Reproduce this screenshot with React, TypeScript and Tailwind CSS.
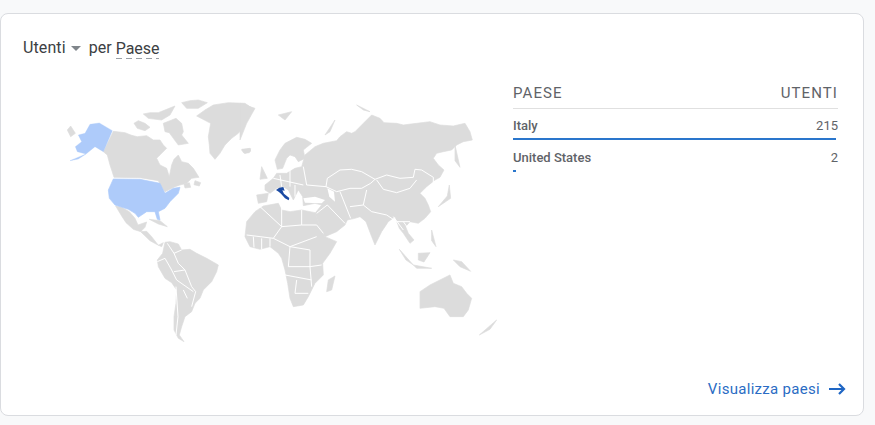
const LAND = '#dcdcdc'
const LIGHT = '#aecbfa'
const DARK = '#1a4aa3'

const americas = [
  // canada
  'M190,124 L225,128 L245,136 L262,140 L290,137 L310,150 L330,150 L340,165 L350,175 L335,190 L320,205 L330,225 L350,235 L358,260 L365,225 L372,208 L385,195 L395,215 L415,220 L430,235 L447,262 L425,265 L410,280 L390,285 L375,290 L345,305 L335,290 L325,272 L270,263 L192,262 L185,240 L180,225 L172,195 L160,185 Z',
  // arctic islands
  'M252,100 L265,92 L285,100 L300,112 L285,122 L262,115 Z',
  'M280,72 L300,68 L325,68 L350,58 L375,48 L360,75 L335,90 L318,88 L295,85 Z',
  'M340,100 L360,92 L378,85 L395,100 L400,125 L395,135 L415,160 L385,165 L370,145 L358,128 L345,125 Z',
  'M395,38 L420,32 L445,30 L472,38 L445,55 L410,55 Z',
  // greenland
  'M440,78 L465,60 L490,45 L535,38 L585,40 L612,58 L592,85 L578,115 L565,130 L545,145 L525,165 L510,190 L495,208 L480,190 L478,165 L475,140 L482,100 Z',
  'M575,178 L600,175 L602,184 L585,190 Z',
  'M52,120 L62,108 L76,130 L62,140 Z',
  // mexico and central america
  'M197,348 L215,352 L238,365 L255,385 L264,405 L290,396 L285,412 L272,425 L250,418 L228,398 L215,378 Z',
  'M272,425 L290,424 L305,440 L325,466 L340,458 L335,470 L318,462 L300,452 Z',
  'M298,388 L330,392 L352,410 L325,402 Z',
  'M402,282 L418,278 L422,292 L405,294 Z',
  'M435,272 L452,278 L448,288 L432,284 Z',
  // south america
  'M345,457 L360,455 L385,462 L395,480 L420,478 L440,490 L470,505 L505,525 L500,545 L485,575 L460,600 L450,625 L435,640 L425,665 L405,680 L395,710 L388,735 L402,755 L385,745 L372,720 L372,680 L378,640 L380,600 L365,578 L345,565 L325,530 L322,510 L338,490 Z',
]

const usa = 'M190,267 L270,268 L330,280 L345,310 L370,295 L390,292 L385,310 L360,335 L345,355 L325,365 L330,390 L322,388 L315,365 L290,365 L265,382 L255,370 L235,358 L195,345 L178,325 L175,300 Z'
const alaska = 'M120,103 L148,99 L187,122 L160,185 L135,170 L108,192 L82,185 L76,170 L95,155 L85,135 L105,130 Z M60,212 L108,192 L85,207 Z'

const americaBorders = [
  'M345,505 L365,540 L380,570 L430,605',
  'M372,545 L405,540 L425,590 L437,605 L425,650',
  'M378,590 L384,680 L378,735',
  'M352,460 L372,490 L395,480 M372,490 L385,520 L405,540',
  'M322,515 L345,505',
  'M400,600 L412,625',
]

const eastern = [
  // eurasia
  'M185,230 L195,195 L225,170 L250,160 L290,152 L300,140 L320,125 L335,130 L345,125 L370,100 L395,75 L420,85 L432,98 L470,100 L490,105 L530,100 L570,95 L600,105 L640,108 L675,100 L690,125 L697,150 L670,155 L650,165 L635,180 L610,185 L590,190 L580,205 L595,225 L612,240 L600,262 L585,270 L560,290 L540,310 L555,325 L565,345 L572,365 L555,385 L535,400 L510,395 L497,410 L505,430 L522,450 L510,460 L490,430 L478,415 L465,380 L445,395 L425,425 L405,465 L395,440 L378,395 L360,380 L345,385 L322,390 L315,405 L290,425 L255,440 L240,410 L225,370 L245,345 L225,340 L190,347 L188,320 L175,300 L160,330 L145,300 L130,290 L110,295 L90,310 L75,300 L75,285 L100,265 L110,250 L140,250 L165,235 Z',
  // scandinavia
  'M105,210 L120,180 L135,160 L170,142 L195,148 L215,160 L200,172 L190,180 L195,205 L175,215 L165,200 L150,195 L140,205 L128,235 L112,238 Z',
  // iberia, britain and islands
  'M50,315 L85,310 L80,335 L55,340 Z',
  'M65,230 L82,265 L60,268 Z',
  'M115,75 L155,65 L135,90 Z',
  'M350,45 L390,65 L370,60 Z',
  'M255,135 L285,90 L270,125 Z',
  'M0,40 L45,55 L20,100 L0,150 Z',
  'M5,180 L32,176 L28,188 L12,190 Z',
  // africa
  'M20,395 L45,365 L70,348 L115,340 L125,360 L150,365 L185,360 L225,368 L240,410 L255,440 L290,455 L270,490 L248,520 L250,555 L225,580 L205,620 L190,645 L160,650 L150,625 L143,580 L135,540 L125,505 L115,490 L90,470 L60,478 L30,470 L15,440 Z',
  'M265,570 L285,558 L275,600 L260,605 Z',
  // japan, sakhalin
  'M628,285 L632,325 L595,350 L622,318 Z',
  'M645,165 L660,232 L645,212 Z',
  // south-east asia
  'M478,478 L520,525 L498,510 Z',
  'M535,490 L570,488 L552,516 L535,510 Z',
  'M575,420 L588,470 L575,452 Z',
  'M640,510 L665,515 L692,544 L660,530 Z',
  'M520,525 L575,535 L530,535 Z',
  // australia
  'M540,605 L570,585 L600,570 L630,555 L640,580 L665,590 L680,610 L695,625 L685,660 L670,680 L630,680 L612,655 L585,650 L540,655 Z',
  'M718,735 L770,690 L750,718 Z',
]

const easternBorders = [
  'M262,265 L300,240 L335,238 L365,245 L405,268 L440,255 L480,265 L520,262 L525,238 L545,240 L580,262 L580,285',
  'M410,270 L430,298 L470,308 L510,295 L530,270',
  'M262,265 L258,290 L290,305 L330,295 L365,295 L392,280 L405,268',
  'M300,305 L332,385 M380,300 L370,345 L330,350',
  'M370,345 L395,365 L440,375 L470,395 L510,395',
  'M190,230 L200,285 L258,290',
  'M230,370 L262,345 M262,345 L315,400',
  'M60,350 L125,410 L125,345 M125,410 L185,405 L185,360',
  'M20,435 L100,445 L125,410 M100,445 L150,470 L230,440',
  'M185,405 L230,405 L250,430',
  'M40,440 L42,472 M65,445 L65,478 M90,445 L90,470',
  'M150,470 L145,530 L210,530 L245,525 M135,555 L215,570 M170,570 L165,610 L205,610',
  'M210,530 L215,590 M150,470 L210,480 L210,530',
  'M100,265 L190,285 M150,240 L150,290 M120,255 L125,290 M165,285 L165,320',
  'M460,380 L490,420 M490,395 L515,430',
]

const MapChart = () => (
  <svg viewBox="0 80 500 280" className="w-[500px] h-[280px] shrink-0 blur-[0.4px]">
    <g transform="translate(50 90) scale(.3333)">
      {americas.map((d) => (
        <path key={d} d={d} fill={LAND} stroke={LAND} strokeWidth="2" strokeLinejoin="round" />
      ))}
      <path d={usa} fill={LIGHT} stroke={LIGHT} strokeWidth="2" strokeLinejoin="round" />
      <path d={alaska} fill={LIGHT} stroke={LIGHT} strokeWidth="1" strokeLinejoin="round" />
      {americaBorders.map((d) => (
        <path key={d} d={d} fill="none" stroke="#fff" strokeWidth="3" />
      ))}
    </g>
    <g transform="translate(240 90) scale(.3333)">
      {eastern.map((d) => (
        <path key={d} d={d} fill={LAND} stroke={LAND} strokeWidth="2" strokeLinejoin="round" />
      ))}
      {easternBorders.map((d) => (
        <path key={d} d={d} fill="none" stroke="#fff" strokeWidth="3" />
      ))}
      <path d="M190,325 L225,320 L255,330 L245,340 L195,338 Z" fill="#fff" />
      <path d="M262,295 L282,305 L285,335 L268,320 Z" fill="#fff" />
      <path d="M108,300 L118,293 L130,291 L134,302 L127,301 L132,311 L148,324 L146,331 L135,325 L123,311 L116,305 Z" fill={DARK} />
    </g>
  </svg>
)

const rows = [
  { name: 'Italy', value: 215, width: 'w-[323px]' },
  { name: 'United States', value: 2, width: 'w-[3px]' },
]

const CountryTable = () => (
  <div className="w-[325px] ml-[13px] mt-[4px] font-['Roboto',sans-serif]">
    <div className="flex justify-between h-[25px] border-b border-[#e0e0e0] text-[15px] leading-[18px] tracking-[1.1px] text-[#5f6368]">
      <span>PAESE</span>
      <span>UTENTI</span>
    </div>
    {rows.map((row) => (
      <div key={row.name} className="h-[32px] pt-[9px]">
        <div className="flex justify-between text-[13px] leading-[16px] text-[#5f6368]">
          <span className="font-medium">{row.name}</span>
          <span>{row.value}</span>
        </div>
        <div className={`${row.width} h-[2px] mt-[4px] bg-[#2a76cc]`} />
      </div>
    ))}
  </div>
)

export default function App() {
  return (
    <div className="w-[875px] h-[425px] pt-[13px] bg-[#f8f9fa] overflow-hidden">
      <div className="w-[864px] h-[403px] flex flex-col bg-white border border-[#dadce0] rounded-lg">
        <div className="flex items-center h-[24px] mt-[22px] pl-[22px] font-['Roboto',sans-serif] text-[16px] tracking-[0.1px] text-[#3c4043]">
          <span>Utenti</span>
          <span className="ml-[5px] mr-[8px] mt-[1px] border-x-[5px] border-t-[5px] border-x-transparent border-t-[#80868b]" />
          <span>per</span>
          <span className="ml-[4px] flex flex-col tracking-[-0.1px] leading-[19px] mt-[1px]">
            Paese
            <span className="h-px bg-[repeating-linear-gradient(90deg,#9aa0a6_0_6px,transparent_6px_10px)]" />
          </span>
        </div>
        <div className="flex h-[280px] mt-[20px] -ml-px">
          <MapChart />
          <CountryTable />
        </div>
        <div className="flex items-center justify-end gap-[9px] mt-auto mb-[16px] pr-[17px] font-['Roboto',sans-serif] text-[15px] leading-[20px] tracking-[0.3px] text-[#2a6cc4]">
          <span>Visualizza paesi</span>
          <svg viewBox="0 0 17 14" className="w-[17px] h-[14px]" fill="none" stroke="#1f66c4" strokeWidth="2.2">
            <path d="M0,7 H15 M10,2 L15,7 L10,12" />
          </svg>
        </div>
      </div>
    </div>
  )
}
